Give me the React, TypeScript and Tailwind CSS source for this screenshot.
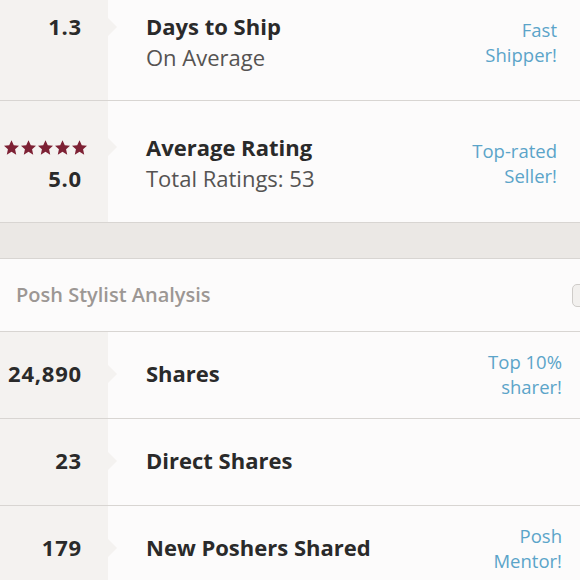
import type { ReactNode } from "react";

const FONT = { fontFamily: "'Open Sans', Lato, sans-serif" };

function Stars() {
	return (
		<div className="flex gap-[2px]">
			{[0, 1, 2, 3, 4].map((i) => (
				<svg key={i} viewBox="1.5 1.5 21 20" className="h-[15px] w-[15px] fill-[#7d2134]">
					<path d="M12 1.5l3.2 6.9 7.3.7-5.5 5 1.6 7.4L12 17.6l-6.6 3.9 1.6-7.4-5.5-5 7.3-.7z" />
				</svg>
			))}
		</div>
	);
}

interface StatRowProps {
	value: ReactNode;
	title: string;
	subtitle?: string;
	badge?: [string, string];
	className?: string;
	// padding shared by both columns, to nudge the text without breaking the grey column
	inner?: string;
	badgeInset?: string;
}

function StatRow({ value, title, subtitle, badge, className, inner = "", badgeInset = "pr-[20px]" }: StatRowProps) {
	return (
		<div className={`flex border-b border-[#d8d5d2] ${className ?? ""}`}>
			<div className={`flex w-[108px] shrink-0 flex-col items-end justify-center bg-[#f4f2f0] pr-[26px] ${inner}`}>
				{value}
			</div>
			<div className={`flex flex-1 items-center justify-between pl-[38px] ${badgeInset} ${inner}`}>
				<div className="flex flex-col">
					<div className="relative">
						<span className="absolute left-[-38px] top-1/2 h-0 w-0 -translate-y-1/2 border-y-[9px] border-l-[9px] border-y-transparent border-l-[#f4f2f0]" />
						<p className="text-[22px] font-bold leading-[31px] text-[#2a2a2a]">{title}</p>
					</div>
					{subtitle && (
						<p className="text-[22px] leading-[31px] text-[#555352]">{subtitle}</p>
					)}
				</div>
				{badge && (
					<div className="text-right text-[18.5px] leading-[25px] text-[#5ba4c9]">
						<p>{badge[0]}</p>
						<p>{badge[1]}</p>
					</div>
				)}
			</div>
		</div>
	);
}

function Num({ children }: { children: ReactNode }) {
	return (
		<span className="block text-[22px] font-bold leading-[31px] tracking-[0.8px] text-[#2a2a2a]">
			{children}
		</span>
	);
}

export default function App() {
	return (
		<div className="h-[580px] w-[580px] overflow-hidden bg-[#fcfbfb]" style={FONT}>
			<div className="-mt-[14px]">
				<StatRow
					className="h-[115px]"
					inner="pb-[2px]"
					badgeInset="pr-[23px]"
					value={
						<>
							<Num>1.3</Num>
							<span className="block h-[31px]" />
						</>
					}
					title="Days to Ship"
					subtitle="On Average"
					badge={["Fast", "Shipper!"]}
				/>
				<StatRow
					className="h-[122px]"
					inner="pt-[2px]"
					badgeInset="pr-[23px]"
					value={
						<>
							<div className="-mr-[5px] flex h-[31px] items-center">
								<Stars />
							</div>
							<Num>5.0</Num>
						</>
					}
					title="Average Rating"
					subtitle="Total Ratings: 53"
					badge={["Top-rated", "Seller!"]}
				/>
			</div>

			<div className="h-[36px] border-b border-[#d8d5d2] bg-[#ebe8e5]" />

			<div className="flex h-[73px] items-center justify-between border-b border-[#d8d5d2] pl-[16px]">
				<p className="text-[20px] font-semibold text-[#9c9794]">Posh Stylist Analysis</p>
				<div className="-mr-[14px] h-[23px] w-[22px] rounded-[5px] border border-[#cfccc9] bg-[#f2f0ee]" />
			</div>

			<StatRow className="h-[87px]" inner="pb-[3px]" badgeInset="pr-[18px]" value={<Num>24,890</Num>} title="Shares" badge={["Top 10%", "sharer!"]} />
			<StatRow className="h-[87px]" inner="pb-[3px]" badgeInset="pr-[18px]" value={<Num>23</Num>} title="Direct Shares" />
			<StatRow className="h-[87px]" inner="pb-[3px]" badgeInset="pr-[18px]" value={<Num>179</Num>} title="New Poshers Shared" badge={["Posh", "Mentor!"]} />
		</div>
	);
}
